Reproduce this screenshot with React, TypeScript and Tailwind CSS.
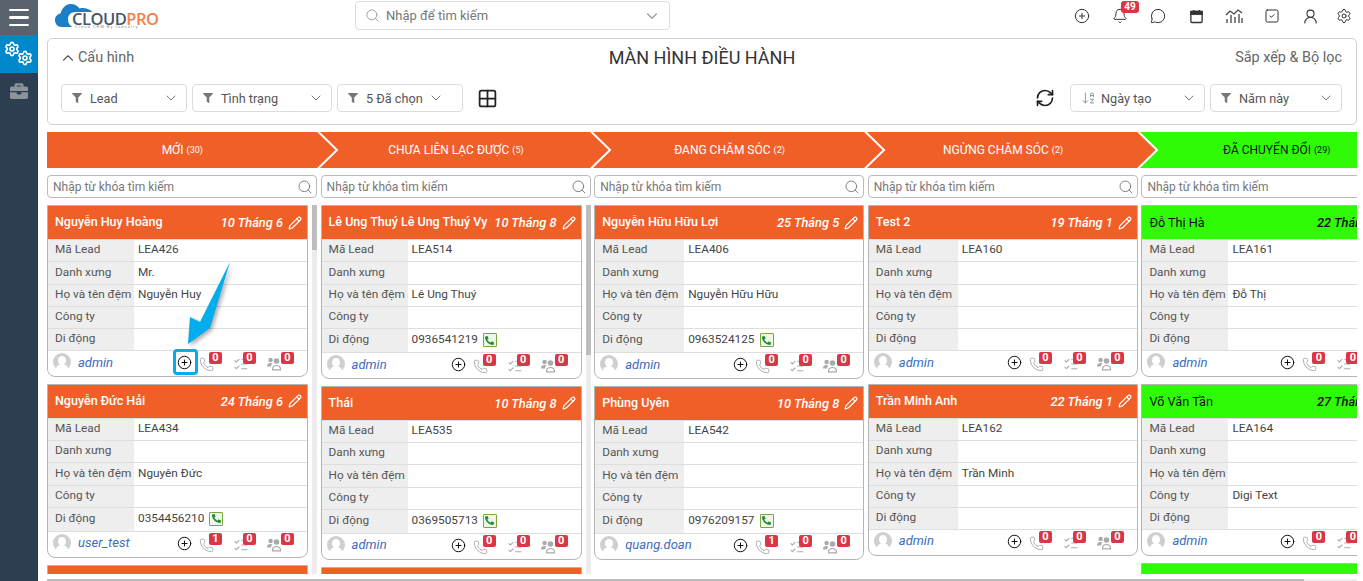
import React from "react";
import {
  CirclePlus, Bell, MessageCircle, SquareCheck, UserRound, Settings, ChevronDown, ChevronUp, Search,
  RefreshCw, Grid2x2, ArrowDownAZ, Pencil, Phone, ListChecks,
} from "lucide-react";
import { FaFilter, FaBriefcase, FaPhone } from "react-icons/fa";

type CardData = {
  name: string; date: string; code?: string; title?: string; last?: string; company?: string; phone?: string;
  user: string; calls: number; stub?: boolean;
};

const ORANGE = "bg-[#f15f29]";
const GREEN = "bg-[#2ffb07]";

function Avatar() {
  return (
    <svg viewBox="0 0 18 18" className="w-[18px] h-[18px] shrink-0">
      <circle cx="9" cy="9" r="9" fill="#cfcfcf" />
      <ellipse cx="9" cy="7.5" rx="4" ry="4.6" fill="#fff" />
      <path d="M2.8 16c.6-3.4 3-4.8 6.200-4.800s5.600 1.400 6.200 4.800A9 9 0 0 1 2.800 16z" fill="#fff" />
    </svg>
  );
}

function PeopleIcon() {
  return (
    <svg viewBox="0 0 16 15" className="w-[16px] h-[15px] mt-[1px]" fill="#aaa">
      <circle cx="3.600" cy="4" r="2.200" />
      <path d="M0 10c0-2 1.500-3 3.600-3 .8 0 1.500.2 2 .5C4.500 8.300 4 9.300 4 10.500H0z" />
      <circle cx="9.500" cy="5" r="2.800" />
      <path d="M5 14.500V12.500c0-2.200 2-3.600 4.500-3.600s4.500 1.400 4.500 3.600v2zM6.200 13.300h6.600v-.8c0-1.400-1.400-2.400-3.300-2.400s-3.300 1-3.300 2.400z" fillRule="evenodd" />
    </svg>
  );
}

function Badge({ n, left }: { n: number; left: string }) {
  return (
    <span className={`absolute top-[-3px] ${left} w-[13px] h-[12px] rounded-[2px] bg-[#dc3545] text-white text-[11px] font-bold leading-[12px] text-center`}>
      {n}
    </span>
  );
}

function Row({ label, value, phone, labelW }: { label: string; value?: string; phone?: boolean; labelW: string }) {
  return (
    <div className={`flex border-t border-[#dedede] ${phone ? "h-[24.25px]" : "h-[22.25px]"}`}>
      <div className={`${labelW} shrink-0 bg-[#eeeeee] pl-[7px] pb-[1px] flex items-center text-[11.8px] text-[#555] whitespace-nowrap`}>{label}</div>
      <div className="flex-1 pl-[4px] pb-[1px] flex items-center text-[11.8px] text-[#444] whitespace-nowrap">
        {value}
        {phone && (
          <span className="ml-[5px] w-[14px] h-[14px] border border-[#7aa63a] rounded-[1px] bg-[#eef7e6] flex items-center justify-center">
            <FaPhone className="w-[9px] h-[9px] text-[#1f8a3b] scale-x-[-1]" />
          </span>
        )}
      </div>
    </div>
  );
}

function Card({ c, green, labelW }: { c: CardData; green?: boolean; labelW: string }) {
  const fg = green ? "text-[#111]" : "text-white";
  return (
    <div className="mb-[6.5px] border border-[#b5b5b5] rounded-b-[8px] bg-white overflow-hidden shrink-0">
      <div className={`h-[33px] flex items-center pl-[7px] pr-[5px] ${green ? GREEN : ORANGE} ${fg}`}>
        {c.name && <span className={`whitespace-nowrap ${green ? "text-[12.7px]" : "text-[12.5px] font-medium"}`}>{c.name}</span>}
        {c.date && <span className="ml-auto text-[12.8px] italic font-medium whitespace-nowrap">{c.date}</span>}
        {!c.stub && <Pencil className="ml-[5px] w-[14px] h-[14px] shrink-0" strokeWidth={2} />}
      </div>
      {!c.stub && (
        <>
          <Row label="Mã Lead" value={c.code} labelW={labelW} />
          <Row label="Danh xưng" value={c.title} labelW={labelW} />
          <Row label="Họ và tên đệm" value={c.last} labelW={labelW} />
          <Row label="Công ty" value={c.company} labelW={labelW} />
          <Row label="Di động" value={c.phone} phone={!!c.phone} labelW={labelW} />
          <div className="h-[26px] border-t border-[#dedede] flex items-center pl-[5px] pr-[6px] pb-[3px]">
            <Avatar />
            <span className="ml-[7px] text-[13px] italic text-[#3b6cc0] whitespace-nowrap">{c.user}</span>
            <CirclePlus className="ml-auto w-[15px] h-[15px] text-[#111] shrink-0" strokeWidth={1.6} />
            <span className="relative ml-[7px] w-[34px] h-[14px] shrink-0">
              <Phone className="w-[15px] h-[15px] text-[#aaa] mt-[2px]" strokeWidth={1.5} />
              <Badge n={c.calls} left="left-[10px]" />
            </span>
            <span className="relative w-[34px] h-[14px] shrink-0">
              <ListChecks className="w-[16px] h-[16px] text-[#aaa] mt-[1px]" strokeWidth={1.6} />
              <Badge n={0} left="left-[10px]" />
            </span>
            <span className="relative w-[34px] h-[14px] shrink-0">
              <PeopleIcon />
              <Badge n={0} left="left-[14px]" />
            </span>
          </div>
        </>
      )}
    </div>
  );
}

const columns: { title: string; count: number; green?: boolean; thumb?: string; labelW: string; cards: CardData[] }[] = [
  {
    title: "MỚI", count: 30, thumb: "h-[45px]", labelW: "w-[86px]",
    cards: [
      { name: "Nguyễn Huy Hoàng", date: "10 Tháng 6", code: "LEA426", title: "Mr.", last: "Nguyễn Huy", user: "admin", calls: 0 },
      { name: "Nguyễn Đức Hải", date: "24 Tháng 6", code: "LEA434", last: "Nguyên Đức", phone: "0354456210", user: "user_test", calls: 1 },
      { name: "", date: "", user: "", calls: 0, stub: true },
    ],
  },
  {
    title: "CHƯA LIÊN LẠC ĐƯỢC", count: 5, thumb: "h-[150px]", labelW: "w-[86px]",
    cards: [
      { name: "Lê Ung Thuý Lê Ung Thuý Vy", date: "10 Tháng 8", code: "LEA514", last: "Lê Ung Thuý", phone: "0936541219", user: "admin", calls: 0 },
      { name: "Thái", date: "10 Tháng 8", code: "LEA535", phone: "0369505713", user: "admin", calls: 0 },
      { name: "", date: "", user: "", calls: 0, stub: true },
    ],
  },
  {
    title: "ĐANG CHĂM SÓC", count: 2, labelW: "w-[89px]",
    cards: [
      { name: "Nguyễn Hữu Hữu Lợi", date: "25 Tháng 5", code: "LEA406", last: "Nguyễn Hữu Hữu", phone: "0963524125", user: "admin", calls: 0 },
      { name: "Phùng Uyên", date: "10 Tháng 8", code: "LEA542", phone: "0976209157", user: "quang.doan", calls: 1 },
    ],
  },
  {
    title: "NGỪNG CHĂM SÓC", count: 2, labelW: "w-[89px]",
    cards: [
      { name: "Test 2", date: "19 Tháng 1", code: "LEA160", user: "admin", calls: 0 },
      { name: "Trần Minh Anh", date: "22 Tháng 1", code: "LEA162", last: "Trần Minh", user: "admin", calls: 0 },
    ],
  },
  {
    title: "ĐÃ CHUYỂN ĐỔI", count: 29, green: true, labelW: "w-[86px]",
    cards: [
      { name: "Đỗ Thị Hà", date: "22 Tháng 12", code: "LEA161", last: "Đỗ Thị", user: "admin", calls: 0 },
      { name: "Võ Văn Tần", date: "27 Tháng 12", code: "LEA164", company: "Digi Text", user: "admin", calls: 0 },
      { name: "", date: "", user: "", calls: 0, stub: true },
    ],
  },
];

function Select({ w, icon, label, gap = "ml-[8px]", pr = "pr-[7px]" }: { w: string; icon: React.ReactNode; label: string; gap?: string; pr?: string }) {
  return (
    <div className={`${w} h-[28px] border border-[#dcdcdc] rounded-[4px] bg-white flex items-center pl-[10px] ${pr} text-[12.7px] text-[#555] shrink-0`}>
      {icon}
      <span className={`${gap} pt-[1px] whitespace-nowrap`}>{label}</span>
      <ChevronDown className="ml-auto w-[16px] h-[16px] text-[#777]" strokeWidth={1.5} />
    </div>
  );
}

const funnel = <FaFilter className="w-[10px] h-[10px] text-[#777] shrink-0" />;

function CalendarIcon() {
  return (
    <svg viewBox="0 0 16 16" className="w-[15px] h-[15px]" fill="none" stroke="#333" strokeWidth="1.4">
      <rect x="2" y="2.600" width="12" height="11.800" rx="1" />
      <rect x="2" y="2.600" width="12" height="3" fill="#333" />
      <path d="M5 1v2M11 1v2" />
    </svg>
  );
}

function ChartIcon() {
  return (
    <svg viewBox="0 0 18 16" className="w-[18px] h-[16px]" fill="none" stroke="#444" strokeWidth="1.3">
      <path d="M1 7l4-4 4 3 4-4 4 3" />
      <path d="M2 15v-4M6 15V7M10 15V9M14 15V6M17 15v-5" />
    </svg>
  );
}

function Logo() {
  return (
    <div className="relative w-[110px] h-[27px] ml-[17px] mt-[4px] shrink-0">
      <svg viewBox="0 0 40 24" className="absolute left-0 top-0 w-[40px] h-[24px]">
        <path d="M7 23C2 23 0 19.500 0 16c0-3.500 2.500-6 5.500-6.500C7 4 11 0 15.500 0c4 0 7.500 2 9 4.500 3.500-1 9-.5 13 3.500H21c-5 0-8 2.800-8 7.200 0 3.500 1.500 6.300 4.500 7.800H7z" fill="#1b7ec6" />
      </svg>
      <span className="absolute left-[17px] top-[8px] text-[16.5px] leading-[13px] font-semibold tracking-[-0.5px] font-['Open_Sans',sans-serif] whitespace-nowrap">
        <span className="text-[#44566b]">CLOUD</span><span className="text-[#f0804a]">PRO</span>
      </span>
      <span className="absolute left-[20px] top-[21px] text-[4px] leading-[4px] text-[#8a8a8a] tracking-[1.1px] whitespace-nowrap">Cloud CRM By Industry</span>
    </div>
  );
}

export default function App() {
  return (
    <div className="relative w-[1363px] h-[581px] overflow-hidden flex bg-white font-['Roboto',sans-serif]">
      <aside className="w-[38px] shrink-0 bg-[#2c3e50] flex flex-col">
        <div className="h-[35px] bg-[#58636e] flex flex-col items-center justify-center gap-[5px]">
          <span className="w-[20px] h-[2.5px] rounded bg-white" />
          <span className="w-[20px] h-[2.5px] rounded bg-white" />
          <span className="w-[20px] h-[2.5px] rounded bg-white" />
        </div>
        <div className="h-[38px] bg-[#0088cc] relative">
          <Settings className="absolute left-[4px] top-[6px] w-[16px] h-[16px] text-white" strokeWidth={2.5} />
          <Settings className="absolute left-[17px] top-[15px] w-[16px] h-[16px] text-white" strokeWidth={2.5} />
        </div>
        <div className="h-[36px] flex items-center justify-center">
          <FaBriefcase className="w-[20px] h-[18px] text-[#8b939b]" />
        </div>
      </aside>

      <main className="w-[1319px] ml-[9px] flex flex-col overflow-hidden">
        <header className="h-[38px] flex shrink-0 -ml-[9px]">
          <Logo />
          <div className="ml-[190px] mt-[1px] w-[315px] shrink-0 h-[29px] border border-[#dcdcdc] rounded-[4px] flex items-center pl-[9px] pr-[8px] text-[13px] text-[#777]">
            <Search className="w-[15px] h-[15px] text-[#999]" strokeWidth={1.5} />
            <span className="ml-[6px]">Nhập để tìm kiếm</span>
            <ChevronDown className="ml-auto w-[18px] h-[18px] text-[#999]" strokeWidth={1.5} />
          </div>
          <div className="ml-[393px] mt-[8px] h-[16px] flex items-center shrink-0 text-[#333]">
            <span className="w-[38px] flex justify-center"><CirclePlus className="w-[16px] h-[16px]" strokeWidth={1.5} /></span>
            <span className="w-[38px] flex justify-center relative">
              <Bell className="w-[16px] h-[16px]" strokeWidth={1.5} />
              <span className="absolute left-[20px] top-[-7px] w-[18px] h-[12px] rounded-[3px] bg-[#dc3545] text-white text-[10px] font-bold leading-[12px] text-center">49</span>
            </span>
            <span className="w-[38px] flex justify-center"><MessageCircle className="w-[16px] h-[16px]" strokeWidth={1.5} /></span>
            <span className="w-[38px] flex justify-center"><CalendarIcon /></span>
            <span className="w-[38px] flex justify-center"><ChartIcon /></span>
            <span className="w-[38px] flex justify-center"><SquareCheck className="w-[16px] h-[16px]" strokeWidth={1.5} /></span>
            <span className="w-[38px] flex justify-center"><UserRound className="w-[17px] h-[17px]" strokeWidth={1.5} /></span>
            <span className="w-[30px] flex justify-center"><Settings className="w-[16px] h-[16px]" strokeWidth={1.5} /></span>
          </div>
        </header>

        <section className="w-[1310px] h-[87px] shrink-0 border border-[#d0d0d0] rounded-[5px] bg-white pl-[13px] pr-[14px] relative">
          <div className="h-[37px] flex items-center text-[14.4px] text-[#666]">
            <ChevronUp className="w-[18px] h-[18px] -ml-[2px] mr-[1px] text-[#555]" strokeWidth={1.5} />
            <span>Cấu hình</span>
            <span className="absolute left-0 right-0 text-center text-[18px] text-[#333] pointer-events-none">MÀN HÌNH ĐIỀU HÀNH</span>
            <span className="ml-auto">Sắp xếp &amp; Bộ lọc</span>
          </div>
          <div className="mt-[8px] flex items-center gap-[5px]">
            <Select w="w-[126px]" icon={funnel} label="Lead" />
            <Select w="w-[140px]" icon={funnel} label="Tình trạng" />
            <Select w="w-[126px]" icon={funnel} label="5 Đã chọn" pr="pr-[18px]" />
            <Grid2x2 className="ml-[9px] w-[21px] h-[21px] text-[#222]" strokeWidth={2} />
            <RefreshCw className="ml-auto w-[20px] h-[20px] text-[#222]" strokeWidth={2} />
            <span className="w-[5px]" />
            <Select w="w-[135px]" icon={<ArrowDownAZ className="w-[15px] h-[16px] text-[#888] shrink-0" strokeWidth={1.4} />} label="Ngày tạo" gap="ml-[5px]" />
            <Select w="w-[132px]" icon={funnel} label="Năm này" />
          </div>
        </section>

        <div className="w-[1310px] h-[36px] mt-[7px] shrink-0 flex overflow-hidden">
          {columns.map((c, i) => (
            <div key={c.title} className={`relative w-[273.6px] shrink-0 flex items-center justify-center pr-[3px] text-[12px] ${c.green ? `${GREEN} text-[#111]` : `${ORANGE} text-white`}`}>
              <span className="whitespace-nowrap">{c.title} <span className="text-[9px] align-[1px]">({c.count})</span></span>
              {i < 4 && (
                <svg viewBox="0 0 24 36" className="absolute z-10 right-[-18px] top-0 w-[24px] h-[36px]">
                  <path d="M0 0H2.500L22 18 2.500 36H0z" fill="#f15f29" />
                  <path d="M2.500 -1L22 18 2.500 37" fill="none" stroke="#fff" strokeWidth="2" />
                </svg>
              )}
            </div>
          ))}
        </div>

        <div className="w-[1310px] mt-[7px] flex flex-1 overflow-hidden">
          {columns.map((c) => (
            <div key={c.title} className="w-[273.6px] shrink-0 flex flex-col">
              <div className="w-[270px] h-[23px] shrink-0 border border-[#bbbbbb] rounded-[4px] flex items-center pl-[5px] pr-[3px] text-[12px] text-[#777]">
                <span className="whitespace-nowrap">Nhập từ khóa tìm kiếm</span>
                <Search className="ml-auto w-[16px] h-[16px] text-[#777]" strokeWidth={1.4} />
              </div>
              <div className="mt-[7px] h-[369px] w-[270px] flex overflow-hidden">
                <div className={`${c.thumb ? "w-[261px]" : "w-[270px]"} shrink-0 flex flex-col`}>
                  {c.cards.map((card, j) => <Card key={j} c={card} green={c.green} labelW={c.labelW} />)}
                </div>
                {c.thumb && (
                  <div className="ml-[4px] w-[5px] bg-[#ececec] shrink-0">
                    <div className={`${c.thumb} bg-[#bdbdbd]`} />
                  </div>
                )}
              </div>
            </div>
          ))}
        </div>

        <div className="w-[1310px] h-[2px] shrink-0 mt-[5px] flex bg-[#eeeeee]">
          <div className="w-[1257px] bg-[#bcbcbc]" />
        </div>
      </main>

      {/* chú thích mũi tên trên ảnh */}
      <svg className="absolute left-[180px] top-[258px] w-[60px] h-[95px] overflow-visible drop-shadow-[2px_2px_2px_rgba(0,0,0,0.35)]" viewBox="0 0 60 95">
        <path d="M50 4 L30 70 L8 86 L10 59 L20 64 Z" fill="#00aeef" />
      </svg>
      <div className="absolute left-[173px] top-[349px] w-[25px] h-[26px] border-[3px] border-[#00aeef] rounded-[4px]" />
    </div>
  );
}
